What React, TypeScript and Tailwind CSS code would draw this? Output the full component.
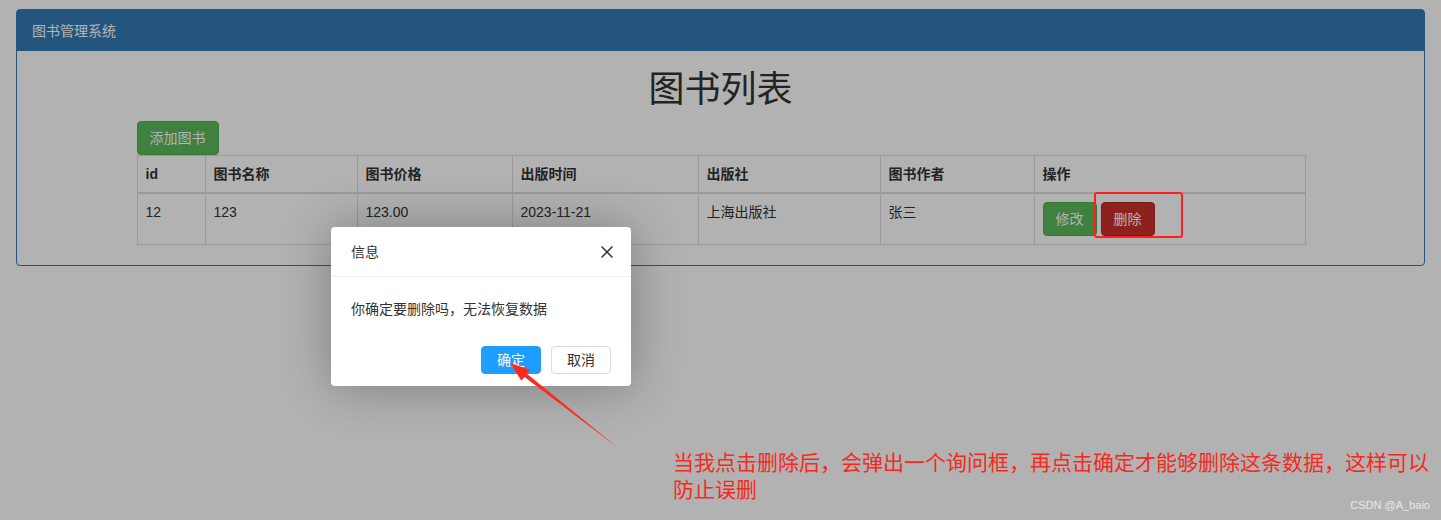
import type { ReactNode } from 'react'

const font = '[font-family:"Liberation_Sans","Noto_Sans_CJK_SC",sans-serif]'

function Th(props: { w: string; children: ReactNode }) {
  return (
    <th className={`${props.w} border border-b-2 border-[#ddd] px-2 py-2 text-left align-bottom text-sm leading-5 font-bold text-[#333]`}>
      {props.children}
    </th>
  )
}

function Td(props: { children: ReactNode }) {
  return <td className="border border-[#ddd] px-2 py-2 align-top text-sm leading-5 text-[#333]">{props.children}</td>
}

function Btn(props: { color: string; children: ReactNode }) {
  return (
    <button type="button" className={`rounded border px-3 py-[6px] text-sm leading-5 text-white ${props.color}`}>
      {props.children}
    </button>
  )
}

export default function App() {
  return (
    <div className={`relative h-[520px] w-[1441px] overflow-hidden bg-white ${font}`}>
      <div className="px-4 pt-[9px]">
        <div className="rounded border border-[#337ab7]">
          <div className="flex h-[41px] items-center bg-[#337ab7] px-[15px] text-sm text-white">图书管理系统</div>
          <div className="px-[15px] pt-[19px] pb-5">
            <h1 className="text-center text-[36px] leading-[40px] text-[#333]">图书列表</h1>
            <div className="mx-auto mt-[11px] w-[1168px]">
              <Btn color="border-[#4cae4c] bg-[#5cb85c]">添加图书</Btn>
              <table className="w-full table-fixed border-collapse">
                <thead>
                  <tr>
                    <Th w="w-[68px]">id</Th>
                    <Th w="w-[152px]">图书名称</Th>
                    <Th w="w-[155px]">图书价格</Th>
                    <Th w="w-[186px]">出版时间</Th>
                    <Th w="w-[182px]">出版社</Th>
                    <Th w="w-[154px]">图书作者</Th>
                    <Th w="w-[271px]">操作</Th>
                  </tr>
                </thead>
                <tbody>
                  <tr>
                    <Td>12</Td>
                    <Td>123</Td>
                    <Td>123.00</Td>
                    <Td>2023-11-21</Td>
                    <Td>上海出版社</Td>
                    <Td>张三</Td>
                    <Td>
                      <div className="flex gap-1">
                        <Btn color="border-[#4cae4c] bg-[#5cb85c]">修改</Btn>
                        <Btn color="border-[#ac2925] bg-[#c9302c]">删除</Btn>
                      </div>
                    </Td>
                  </tr>
                </tbody>
              </table>
            </div>
          </div>
        </div>
      </div>

      {/* shade */}
      <div className="absolute inset-0 bg-black/30" />

      {/* dialog */}
      <div className="absolute top-[227px] left-[331px] w-[300px] rounded-sm bg-white shadow-[1px_1px_50px_rgba(0,0,0,0.3)]">
        <div className="relative flex h-[50px] items-center border-b border-[#f0f0f0] pl-5 text-sm text-[#333]">
          信息
          <svg className="absolute top-[19px] right-[18px]" width="12" height="12" viewBox="0 0 12 12">
            <path d="M0.5 0.5L11.5 11.5M11.5 0.5L0.5 11.5" stroke="#333" strokeWidth="1.5" fill="none" />
          </svg>
        </div>
        <div className="p-5 text-sm leading-6 text-[#333]">你确定要删除吗，无法恢复数据</div>
        <div className="flex justify-end gap-[10px] px-5 pb-3">
          <button type="button" className="mt-[5px] h-7 w-[60px] rounded-sm border border-[#1e9fff] bg-[#1e9fff] text-sm text-white">
            确定
          </button>
          <button type="button" className="mt-[5px] h-7 w-[60px] rounded-sm border border-[#dedede] bg-white text-sm text-[#333]">
            取消
          </button>
        </div>
      </div>

      {/* annotations */}
      <div className="absolute top-[192px] left-[1094px] h-[46px] w-[89px] rounded-[3px] border-2 border-[#ff1f1f]" />
      <svg className="pointer-events-none absolute inset-0" width="1441" height="520">
        <polygon
          points="510,363 530,369.8 526.9,373.7 617,447 524.5,376.9 521.4,380.8"
          fill="#ff2a1f"
        />
      </svg>
      <div className="absolute top-[449px] left-[673px] text-[21px] leading-[27px] text-[#f8281c]">
        当我点击删除后，会弹出一个询问框，再点击确定才能够删除这条数据，这样可以
        <br />
        防止误删
      </div>
      <div className="absolute top-[497px] right-[11px] text-[11px] text-[#e8e8e8]">CSDN @A_baio</div>
    </div>
  )
}
